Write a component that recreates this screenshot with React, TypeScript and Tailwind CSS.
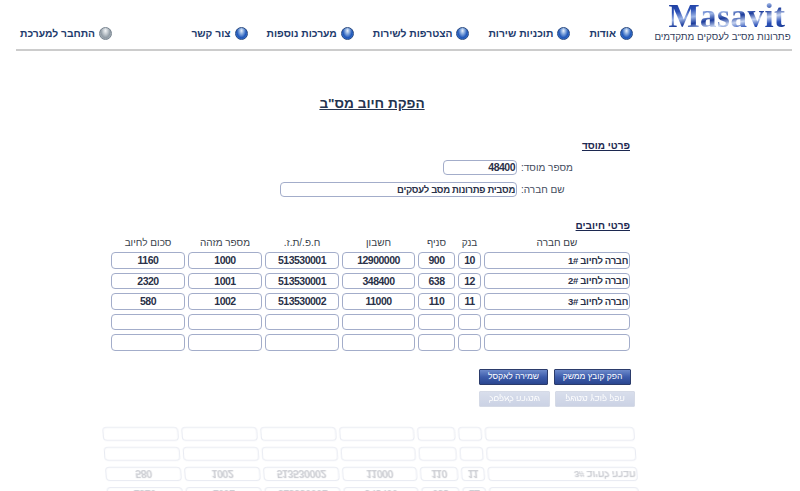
const NAV = ["אודות", "תוכניות שירות", "הצטרפות לשירות", "מערכות נוספות", "צור קשר"];

const HEADERS = ["שם חברה", "בנק", "סניף", "חשבון", "ח.פ./ת.ז.", "מספר מזהה", "סכום לחיוב"];

const ROWS = [
  ["חברה לחיוב 1#", "10", "900", "12900000", "513530001", "1000", "1160"],
  ["חברה לחיוב 2#", "12", "638", "348400", "513530001", "1001", "2320"],
  ["חברה לחיוב 3#", "11", "110", "11000", "513530002", "1002", "580"],
  ["", "", "", "", "", "", ""],
  ["", "", "", "", "", "", ""],
];

const COLS = "grid grid-cols-[146px_23px_37px_73px_74px_74px_74px] gap-x-[3px]";

function Ball({ gray }: { gray?: boolean }) {
  return (
    <span
      className={
        gray
          ? "w-[13px] h-[13px] rounded-full shrink-0 border border-[#77838f] bg-[radial-gradient(ellipse_at_50%_25%,#f2f4f6_0%,#c3cad0_30%,#8f9aa4_60%,#b4bcc3_85%,#e2e6e9_100%)]"
          : "w-[13px] h-[13px] rounded-full shrink-0 border border-[#2a4a80] bg-[radial-gradient(ellipse_at_50%_25%,#e8f0fb_0%,#7fa5dc_30%,#1f56b8_60%,#3f7fdc_85%,#7fb4f0_100%)]"
      }
    />
  );
}

function Field({ value, className }: { value: string; className: string }) {
  return (
    <div
      className={`border border-[#a3adca] rounded-[4px] bg-white font-bold text-[#2a3148] leading-none flex items-center overflow-hidden whitespace-nowrap ${className}`}
    >
      {value}
    </div>
  );
}

function DebitRow({ row, height }: { row: string[]; height: string }) {
  return (
    <div className={COLS}>
      {row.map((cell, i) => (
        <Field
          key={i}
          value={cell}
          className={
            i === 0
              ? `${height} text-[9.5px] tracking-[-0.3px] justify-start pr-[1px]`
              : `${height} text-[10.5px] tracking-[-0.5px] justify-center`
          }
        />
      ))}
    </div>
  );
}

function ActionButton({ label, width, faded }: { label: string; width: string; faded?: boolean }) {
  return (
    <div
      className={`${width} h-[16px] flex items-center justify-center text-[8.5px] leading-none text-white border rounded-[1px] ${
        faded
          ? "border-[#c4cbdc] bg-[linear-gradient(180deg,#b6c0da_0%,#c9d1e4_100%)]"
          : "border-[#2b3b6b] bg-[linear-gradient(180deg,#6d8acb_0%,#3d5cab_50%,#2a4690_100%)]"
      }`}
    >
      {label}
    </div>
  );
}

export default function App() {
  return (
    <div
      dir="rtl"
      className="w-[800px] h-[491px] overflow-hidden bg-white font-['Liberation_Sans',Arial,sans-serif]"
    >
      {/* Header */}
      <div className="ml-[16px] mr-[8px] h-[51px] border-b-2 border-[#cccccc] flex">
        <div className="w-[135px] mr-[2px] shrink-0 flex flex-col items-center">
          <div
            dir="ltr"
            className="mt-[3px] ml-[9px] h-[27px] font-['Liberation_Serif',serif] font-bold text-[33px] leading-[27px] tracking-[0.5px] text-transparent bg-clip-text bg-[linear-gradient(170deg,#1a3a9a_0%,#2a4fb5_22%,#9db5e6_38%,#1c3c9c_52%,#c6d4f0_66%,#2a50b8_80%,#14307f_100%)]"
          >
            Masavit
          </div>
          <div className="text-[9.8px] leading-[12px] mt-[1px] text-[#33405c] whitespace-nowrap">
            פתרונות מס"ב לעסקים מתקדמים
          </div>
        </div>
        <div className="flex-1 flex items-center justify-between mr-[22px] pl-[4px] pt-[18px] text-[10.3px] font-bold text-[#1d3a6c]">
          <div className="flex gap-[19px]">
            {NAV.map((item) => (
              <div key={item} className="flex items-center gap-[4px] whitespace-nowrap">
                <Ball />
                {item}
              </div>
            ))}
          </div>
          <div className="flex items-center gap-[4px] whitespace-nowrap">
            <Ball gray />
            התחבר למערכת
          </div>
        </div>
      </div>

      {/* Title */}
      <div className="mt-[44px] mr-[56px] text-center text-[13.6px] leading-[18px] font-bold underline text-[#25344f] w-[744px]">
        הפקת חיוב מס"ב
      </div>

      <div className="mt-[26px] mr-[170px] w-[519px] text-[#2a3148]">
        <div className="text-[10px] leading-[14px] font-bold underline text-[#1c2850]">פרטי מוסד</div>

        <div className="mt-[7px] flex items-center h-[15px]">
          <div className="w-[113px] shrink-0 flex justify-end pl-[4px] text-[10px] text-[#444c5e]">מספר מוסד:</div>
          <Field value="48400" className="w-[74px] h-[15px] text-[10.5px] tracking-[-0.5px] justify-start pr-[1px]" />
        </div>
        <div className="mt-[7px] flex items-center h-[15px]">
          <div className="w-[113px] shrink-0 flex justify-end pl-[4px] text-[10px] text-[#444c5e]">שם חברה:</div>
          <Field value="מסבית פתרונות מסב לעסקים" className="w-[237px] h-[15px] text-[9.5px] tracking-[-0.3px] justify-start pr-[1px]" />
        </div>

        <div className="mt-[22px] text-[10px] leading-[14px] font-bold underline text-[#1c2850]">פרטי חיובים</div>

        <div className={`${COLS} mt-[1px] h-[17px] items-center text-[10px] text-[#3a3f4c]`}>
          {HEADERS.map((h) => (
            <div key={h} className="text-center whitespace-nowrap">{h}</div>
          ))}
        </div>

        <div className="mt-[1px] flex flex-col gap-[4px]">
          {ROWS.map((row, i) => (
            <DebitRow key={i} row={row} height="h-[16.5px]" />
          ))}
        </div>

        <div className="mt-[18px] mr-[-1px] flex gap-[6px]">
          <ActionButton label="הפק קובץ ממשק" width="w-[77px]" />
          <ActionButton label="שמירה לאקסל" width="w-[69px]" />
        </div>

        {/* Reflected buttons */}
        <div className="mt-[6px] mr-[-5px] flex gap-[5px] -scale-y-100 opacity-70 blur-[0.4px]">
          <ActionButton label="הפק קובץ ממשק" width="w-[80px]" faded />
          <ActionButton label="שמירה לאקסל" width="w-[71px]" faded />
        </div>
      </div>

      {/* Reflected table */}
      <div className="mt-[20px] mr-[169px] w-[519px] flex flex-col gap-[6px] -scale-y-100 scale-x-[1.025] -skew-x-[4deg] opacity-25 blur-[0.5px]">
        {ROWS.map((row, i) => (
          <DebitRow key={i} row={row} height="h-[14px]" />
        ))}
      </div>
    </div>
  );
}
